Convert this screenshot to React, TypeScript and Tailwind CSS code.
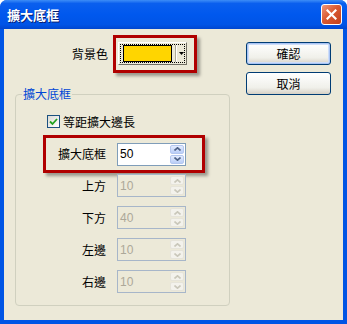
import React from 'react';

const cjk = '"Noto Sans CJK TC", "Noto Sans CJK SC", sans-serif';

function Arrow({ up, color }: { up?: boolean; color: string }) {
  return (
    <svg width="7" height="4" viewBox="0 0 7 4">
      <polyline
        points={up ? '0.5,3.5 3.5,0.8 6.5,3.5' : '0.5,0.5 3.5,3.2 6.5,0.5'}
        fill="none"
        stroke={color}
        strokeWidth="1.6"
      />
    </svg>
  );
}

function Spin({ value, disabled }: { value: string; disabled?: boolean }) {
  const btn = disabled
    ? 'bg-[#F3F2EC] border-[#E6E4DA]'
    : 'bg-[linear-gradient(to_bottom,#E3ECFE,#B9CDF7)] border-[#B4C7EF]';
  const arrow = disabled ? '#C9C7BA' : '#4D6185';
  return (
    <div
      className={`flex h-[23px] w-[69px] border ${
        disabled ? 'border-[#A7B6C9] bg-[#ECE9D8]' : 'border-[#7F9DB9] bg-white'
      }`}
    >
      <div
        className={`flex flex-1 items-center pl-[2px] text-[12px] ${
          disabled ? 'text-[#ACA899]' : 'text-black'
        }`}
        style={{ fontFamily: '"Liberation Sans", Arial, sans-serif' }}
      >
        {value}
      </div>
      <div className="flex w-[16px] flex-col gap-[1px] p-[1px]">
        <div className={`flex flex-1 items-center justify-center rounded-[2px] border ${btn}`}>
          <Arrow up color={arrow} />
        </div>
        <div className={`flex flex-1 items-center justify-center rounded-[2px] border ${btn}`}>
          <Arrow color={arrow} />
        </div>
      </div>
    </div>
  );
}

function Row({ label, value }: { label: string; value: string }) {
  return (
    <div className="ml-[30px] flex items-center gap-[11px]">
      <span className="w-[60px] text-right text-[12px] leading-[14px] text-black">{label}</span>
      <Spin value={value} disabled />
    </div>
  );
}

function XpButton({ children, def }: { children: React.ReactNode; def?: boolean }) {
  return (
    <button
      className={`flex h-[23px] w-[85px] items-center justify-center rounded-[3px] border border-[#003C74] bg-[linear-gradient(to_bottom,#FFFFFF,#F0F0EA_70%,#D6D0C5)] text-[12px] leading-[14px] text-black ${
        def ? 'shadow-[inset_0_0_0_1px_#A9C4F4,inset_0_0_0_2px_#CEDDF8]' : ''
      }`}
    >
      {children}
    </button>
  );
}

export default function App() {
  return (
    <div
      className="flex h-[324px] w-[347px] flex-col overflow-hidden rounded-t-[7px] bg-[#0055E5]"
      style={{ fontFamily: cjk }}
    >
      {/* title bar */}
      <div className="flex h-[29px] shrink-0 items-center justify-between bg-[linear-gradient(to_bottom,#3D8DF7_0%,#0A5FEE_12%,#0058EE_50%,#0054E6_85%,#0046CF_100%)] pl-[7px] pr-[5px]">
        <span className="text-[13px] font-bold leading-[15px] text-white [text-shadow:1px_1px_0_#0A1E6E]">
          擴大底框
        </span>
        <div className="flex h-[21px] w-[21px] items-center justify-center rounded-[3px] border border-white bg-[linear-gradient(135deg,#F0977A,#DA5A33_45%,#C2401C)]">
          <svg width="11" height="11" viewBox="0 0 11 11">
            <path d="M1.5 1.5 L9.5 9.5 M9.5 1.5 L1.5 9.5" stroke="white" strokeWidth="2.2" strokeLinecap="square" />
          </svg>
        </div>
      </div>

      {/* body */}
      <div className="mx-[4px] mb-[4px] flex flex-1 bg-[#ECE9D8]">
        <div className="ml-[11px] flex w-[215px] flex-col pt-[6px]">
          <div className="flex items-center gap-[5px]">
            <span className="w-[93px] text-right text-[12px] leading-[14px] text-black">背景色</span>
            <div className="border-[3px] border-[#B00000] pb-[5px] pl-[2px] pr-[7px] pt-[4px] shadow-[3px_3px_3px_rgba(0,0,0,0.35)]">
              <div className="flex h-[23px] w-[69px] border border-b-[#716F64] border-l-white border-r-[#716F64] border-t-white bg-[#ECE9D8] p-[1px]">
                <div className="flex flex-1 items-center border border-dotted border-black pl-[2px]">
                  <div className="h-[17px] w-[49px] border border-black bg-[#FFD500]" />
                  <div className="ml-[3px] h-[17px] w-[2px] border-l border-r border-l-[#ACA899] border-r-white" />
                  <svg className="ml-[2px]" width="5" height="3" viewBox="0 0 5 3">
                    <polygon points="0,0 5,0 2.5,3" fill="black" />
                  </svg>
                </div>
              </div>
            </div>
          </div>

          {/* group box */}
          <div className="relative mt-[21px] h-[212px] rounded-[4px] border border-[#D0D0BF] pt-[20px]">
            <span className="absolute left-[6px] top-[-8px] bg-[#ECE9D8] px-[1px] text-[12px] leading-[14px] text-[#0046D5]">
              擴大底框
            </span>

            <div className="ml-[31px] flex h-[13px] items-center gap-[3px]">
              <div className="flex h-[13px] w-[13px] items-center justify-center border border-[#1C5180] bg-[linear-gradient(135deg,#DCDBD5,#FFFFFF)]">
                <svg width="9" height="9" viewBox="0 0 9 9">
                  <polyline points="1,4.5 3.5,7 8,2" fill="none" stroke="#21A121" strokeWidth="1.8" />
                </svg>
              </div>
              <span className="text-[12px] leading-[14px] text-black">等距擴大邊長</span>
            </div>

            <div className="ml-[27px] mt-[7px] flex h-[38px] w-[162px] items-center gap-[11px] border-[3px] border-[#B00000] shadow-[3px_3px_3px_rgba(0,0,0,0.35)]">
              <span className="ml-[0px] w-[60px] text-right text-[12px] leading-[14px] text-black">擴大底框</span>
              <Spin value="50" />
            </div>

            <div className="mt-[1px] flex flex-col gap-[9px]">
              <Row label="上方" value="10" />
              <Row label="下方" value="40" />
              <Row label="左邊" value="10" />
              <Row label="右邊" value="10" />
            </div>
          </div>
        </div>

        <div className="ml-[16px] flex flex-col gap-[7px] pt-[13px]">
          <XpButton def>確認</XpButton>
          <XpButton>取消</XpButton>
        </div>
      </div>
    </div>
  );
}
